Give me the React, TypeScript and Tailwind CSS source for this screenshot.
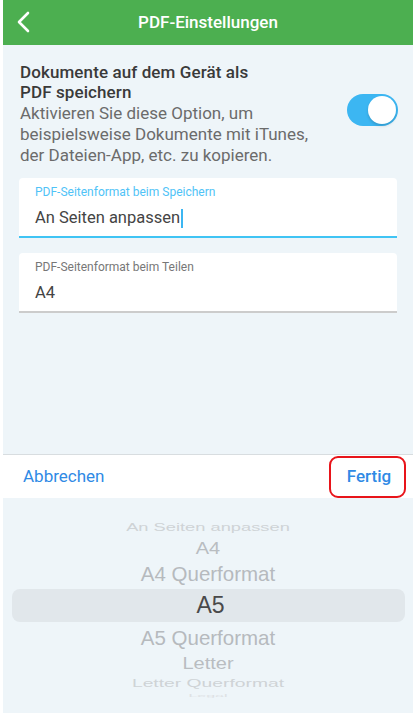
import React from "react";

function Chevron() {
  return (
    <svg width="14" height="22" viewBox="0 0 14 22" fill="none">
      <path d="M12 2 L3 11 L12 20" stroke="white" strokeWidth="2.6" strokeLinecap="round" strokeLinejoin="round" />
    </svg>
  );
}

export default function App() {
  return (
    <div className="min-h-screen bg-white font-['Roboto',sans-serif]">
      <div className="ml-[3px] w-[410px] h-[713px] bg-[#eef5f9] flex flex-col">
        {/* Header */}
        <div className="relative h-[45px] bg-[#4caf50] flex items-center justify-center shrink-0">
          <div className="absolute left-[13px] top-[11px]">
            <Chevron />
          </div>
          <span className="text-white text-[17px] font-medium">PDF-Einstellungen</span>
        </div>

        {/* Setting row */}
        <div className="flex items-center pl-[17px] pr-[15px] pt-[17px]">
          <div className="flex-1">
            <div className="text-[17px] leading-[20px] font-medium text-[#3a3a3a] tracking-[0.1px]">
              Dokumente auf dem Gerät als
              <br />
              PDF speichern
            </div>
            <div className="text-[17px] leading-[21px] text-[#6b6b6b] mt-[1px]">
              Aktivieren Sie diese Option, um
              <br />
              beispielsweise Dokumente mit iTunes,
              <br />
              der Dateien-App, etc. zu kopieren.
            </div>
          </div>
          <div className="w-[51px] h-[32px] rounded-full bg-[#3cb6f2] relative shrink-0 mt-[-8px]">
            <div className="absolute right-[2px] top-[2px] w-[28px] h-[28px] rounded-full bg-white shadow-[0_2px_3px_rgba(0,0,0,0.15)]" />
          </div>
        </div>

        {/* Cards */}
        <div className="px-[16px] mt-[12px] flex flex-col gap-[15px]">
          <div className="bg-white rounded-t-[4px] border-b-2 border-[#40c4f4] px-[16px] pt-[6px] pb-[6px]">
            <div className="text-[12px] leading-[16px] text-[#4fc3f7]">PDF-Seitenformat beim Speichern</div>
            <div className="mt-[6px] text-[16.5px] leading-[24px] text-[#444] flex items-center">
              <span>An Seiten anpassen</span>
              <span className="inline-block w-[2px] h-[19px] bg-[#3cb6f2] ml-[1px]" />
            </div>
          </div>
          <div className="bg-white rounded-t-[4px] border-b-2 border-[#cccccc] px-[16px] pt-[6px] pb-[6px]">
            <div className="text-[12px] leading-[16px] text-[#777]">PDF-Seitenformat beim Teilen</div>
            <div className="mt-[6px] text-[16.5px] leading-[24px] text-[#444]">A4</div>
          </div>
        </div>

        <div className="flex-1" />

        {/* Toolbar */}
        <div className="h-[44px] shrink-0 bg-white border-t border-[#d8dde0] flex items-center justify-between pl-[20px] pr-[7px]">
          <span className="text-[#2f8ae5] text-[17px]">Abbrechen</span>
          <span className="relative h-[42px] w-[77px] rounded-[9px] border-2 border-[#e8141a] flex items-center justify-center">
            <span className="text-[#2f8ae5] text-[17px] font-medium ml-[3px]">Fertig</span>
          </span>
        </div>

        {/* Picker */}
        <div className="h-[215px] shrink-0 flex flex-col pt-[20px] font-['Liberation_Sans',sans-serif] overflow-hidden">
          <div className="h-[20px] flex items-center justify-center">
            <span className="text-[18.3px] text-[#cfd3d6] scale-y-[0.55] inline-block">An Seiten anpassen</span>
          </div>
          <div className="h-[22px] flex items-center justify-center">
            <span className="text-[20px] text-[#b9bdc1] scale-y-[0.78] inline-block">A4</span>
          </div>
          <div className="h-[29px] flex items-center justify-center">
            <span className="text-[20.5px] text-[#b6babe] scale-y-[0.95] inline-block">A4 Querformat</span>
          </div>
          <div className="h-[33px] ml-[9px] mr-[8px] rounded-[8px] bg-[#e1e7eb] flex items-center justify-center">
            <span className="text-[23px] text-[#4a4a4a] ml-[4px]">A5</span>
          </div>
          <div className="h-[32px] flex items-center justify-center">
            <span className="text-[20.5px] text-[#b6babe] scale-y-[0.95] inline-block">A5 Querformat</span>
          </div>
          <div className="h-[18px] flex items-center justify-center">
            <span className="text-[20px] text-[#b9bdc1] scale-y-[0.82] inline-block">Letter</span>
          </div>
          <div className="h-[22px] flex items-center justify-center">
            <span className="text-[19.3px] text-[#cfd3d6] scale-y-[0.55] inline-block">Letter Querformat</span>
          </div>
          <div className="h-[8px] flex items-start justify-center">
            <span className="text-[16px] leading-[16px] text-[#dde1e4] scale-y-[0.25] origin-top inline-block">Legal</span>
          </div>
        </div>
      </div>
    </div>
  );
}
